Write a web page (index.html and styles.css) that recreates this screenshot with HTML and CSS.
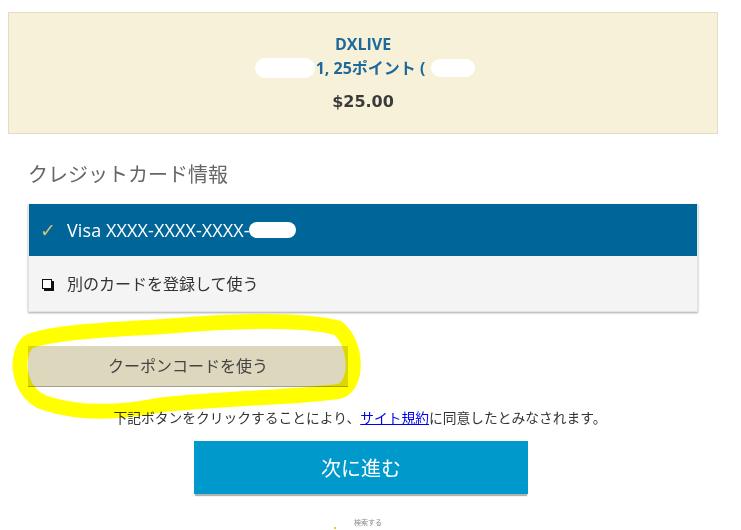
FILE: index.html
```html
<!DOCTYPE html>
<html lang="ja">
<head>
<meta charset="utf-8">
<title>DXLIVE</title>
<link rel="stylesheet" href="styles.css">
</head>
<body>
<div class="page">
  <div class="summary">
    <div class="product">DXLIVE</div>
    <div class="points"><span class="blot blot-a"></span>1, 25ポイント (<span class="blot blot-b"></span></div>
    <div class="price">$25.00</div>
  </div>

  <div class="section">
    <h2 class="heading">クレジットカード情報</h2>
    <div class="cards">
      <div class="card card-selected">
        <span class="check">✓</span>
        <span class="card-label">Visa XXXX-XXXX-XXXX-<span class="blot blot-c"></span></span>
      </div>
      <div class="card card-new">
        <span class="box"></span>
        <span class="card-label-jp">別のカードを登録して使う</span>
      </div>
    </div>

    <div class="coupon-row">
      <button class="coupon">クーポンコードを使う</button>
    </div>

    <p class="agree">下記ボタンをクリックすることにより、<a href="#" class="link">サイト規約</a>に同意したとみなされます。</p>

    <div class="next-row">
      <button class="next">次に進む</button>
    </div>

    <div class="foot"><span class="dot"></span><span class="foot-text">検索する</span></div>
  </div>

  <svg class="marker" width="741" height="530" viewBox="0 0 741 530">
    <path d="M 338 328 C 300 318, 230 321, 170 326 C 110 330, 60 331, 30 341 C 14 351, 16 393, 45 403 C 75 413, 110 415, 160 405 C 230 397, 300 398, 340 391 C 358 385, 358 345, 338 328 Z" fill="none" stroke="#ffff00" stroke-width="15" stroke-linejoin="round"/>
  </svg>
</div>
</body>
</html>
```

FILE: styles.css
```css
html, body {
  margin: 0;
  padding: 0;
  background: #ffffff;
}

body {
  font-family: "Open Sans", "Noto Sans CJK JP", sans-serif;
  color: #333333;
  overflow: hidden;
}

.page {
  position: relative;
  width: 741px;
  height: 530px;
  padding: 12px 23px 0 8px;
  box-sizing: border-box;
}

.summary {
  height: 122px;
  box-sizing: border-box;
  background: #f8f1da;
  border: 1px solid #e3ddc5;
  padding-top: 19px;
  text-align: center;
}

.product {
  font-size: 16px;
  font-weight: 700;
  line-height: 24px;
  color: #1d6a9a;
}

.points {
  font-family: "Open Sans", "Noto Sans CJK JP", sans-serif;
  font-size: 16px;
  font-weight: 700;
  line-height: 24px;
  color: #1d6a9a;
  display: flex;
  justify-content: center;
  align-items: center;
  padding-left: 4px;
}

.blot {
  display: inline-block;
  background: #ffffff;
  border-radius: 10px;
  vertical-align: middle;
}

.blot-a {
  width: 60px;
  height: 20px;
  margin-right: 1px;
}

.blot-b {
  width: 44px;
  height: 18px;
  margin-left: 6px;
}

.blot-c {
  width: 47px;
  height: 16px;
  border-radius: 8px;
  margin-left: -1px;
}

.price {
  margin-top: 10px;
  font-family: "DejaVu Sans", sans-serif;
  font-size: 16px;
  font-weight: 700;
  line-height: 24px;
  color: #3a3a3a;
}

.section {
  padding: 0 20px;
}

.heading {
  margin: 26px 0 16px;
  font-family: "Noto Sans CJK JP", sans-serif;
  font-size: 20px;
  font-weight: 400;
  line-height: 28px;
  color: #666666;
}

.cards {
  box-shadow: 0 1px 2px rgba(0, 0, 0, 0.35);
  border: 1px solid #e4e4e4;
  border-top: none;
}

.card {
  display: flex;
  align-items: center;
  padding-left: 12px;
  box-sizing: border-box;
}

.card-selected {
  height: 52px;
  background: #006699;
  color: #ffffff;
}

.check {
  width: 27px;
  font-size: 19px;
  color: #d4c07c;
  font-family: "DejaVu Sans", sans-serif;
  margin-top: -1px;
  margin-left: -1px;
}

.card-label {
  font-size: 18px;
  letter-spacing: 0.1px;
  display: flex;
  align-items: center;
}

.card-new {
  height: 55px;
  background: #f4f4f4;
  color: #333333;
}

.box {
  width: 8px;
  height: 8px;
  border: 1px solid #111111;
  box-shadow: 2px 2px 0 #111111;
  background: #ffffff;
  margin-right: 15px;
  margin-left: 1px;
}

.card-label-jp {
  font-family: "Noto Sans CJK JP", sans-serif;
  font-size: 16px;
  line-height: 20px;
  margin-top: -2px;
}

.coupon-row {
  margin-top: 34px;
}

.coupon {
  width: 320px;
  height: 41px;
  border: none;
  border-bottom: 1px solid #a59f8d;
  background: #ddd7bd;
  font-family: "Noto Sans CJK JP", sans-serif;
  font-size: 16px;
  color: #444444;
  padding: 0 0 2px;
  cursor: pointer;
}

.agree {
  margin: 20px 0 0;
  text-align: center;
  font-family: "Noto Sans CJK JP", sans-serif;
  font-size: 13.75px;
  line-height: 20px;
  color: #333333;
  padding-right: 6px;
}

.link {
  color: #0000ee;
  text-decoration: underline;
}

.next-row {
  display: flex;
  justify-content: center;
  margin-top: 14px;
  padding-right: 4px;
}

.next {
  width: 334px;
  height: 53px;
  border: none;
  background: #0099cc;
  color: #ffffff;
  font-family: "Noto Sans CJK JP", sans-serif;
  font-size: 20px;
  box-shadow: 0 3px 1px -1px rgba(0, 0, 0, 0.3);
  padding: 0;
  cursor: pointer;
}

.foot {
  display: flex;
  justify-content: center;
  align-items: flex-end;
  margin-top: 21px;
  height: 12px;
  padding-right: 10px;
}

.dot {
  width: 2px;
  height: 2px;
  background: #e6c84a;
  margin-right: 18px;
  margin-bottom: -2px;
}

.foot-text {
  font-family: "Noto Sans CJK JP", sans-serif;
  font-size: 7px;
  color: #888888;
  line-height: 9px;
}

.marker {
  position: absolute;
  left: 0;
  top: 0;
  pointer-events: none;
  mix-blend-mode: multiply;
}
```
